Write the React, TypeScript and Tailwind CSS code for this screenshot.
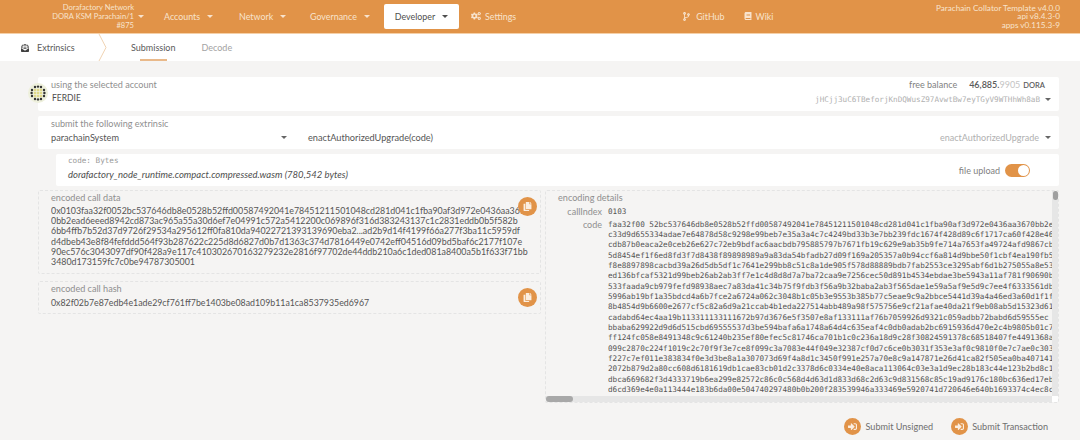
import { FaBook, FaCodeBranch, FaCogs, FaCopy, FaEnvelopeOpenText, FaSignInAlt } from 'react-icons/fa';

const encodedLines = [
  '0x0103faa32f0052bc537646db8e0528b52ffd00587492041e78451211501048cd281d041c1fba90af3d972e0436aa367',
  '0bb2ead6eeed8942cd873ac965a55a30d6ef7e04991c572a5412200c069896f316d383243137c1c2831eddb0b5f582b',
  '6bb4ffb7b52d37d9726f29534a295612ff0fa810da94022721393139690eba2...ad2b9d14f4199f66a277f3ba11c5959df',
  'd4dbeb43e8f84fefddd564f93b287622c225d8d6827d0b7d1363c374d7816449e0742eff04516d09bd5baf6c2177f107e',
  '90ec576c3043097df90f428a9e117c410302670163279232e2816f97702de44ddb210a6c1ded081a8400a5b1f633f71bb',
  '3480d173159fc7c0be94787305001',
];

const codeLines = [
  'faa32f00 52bc537646db8e0528b52ffd00587492041e78451211501048cd281d041c1fba90af3d972e0436aa3670bb2e',
  'c33d9d655334adae7e64878d58c9298e99beb7e35a3a4c7c4249bd33b3e7bb239fdc1674f428d89c6f1717ca60f428e46',
  'cdb87b0eaca2e0ceb26e627c72eb9bdfac6aacbdb795885797b7671fb19c629e9ab35b9fe714a7653fa49724afd9867cb',
  '5d8454ef1f6ed8fd3f7d8438f89898989a9a83da54bfadb27d09f169a205357a0b94ccf6a814d9bbe50f1cbf4ea190fb5',
  'f8e8897898cacbd39a26d5db5df1c7641e299bb8c51c8a1de905f578d88889bdb7fab2553ce3295abf6d1b275055a8e53',
  'ed136bfcaf5321d99beb26ab2ab3ff7e1c4d8d8d7a7ba72caa9e7256cec50d891b4534ebdae3be5943a11af781f90690b',
  '533faada9cb979fefd98938aec7a83da41c34b75f9fdb3f56a9b32baba2ab3f565dae1e59a5af9e5d9c7ee4f6333561db',
  '5996ab19bf1a35bdcd4a6b7fce2a6724a062c3048b1c05b3e9553b385b77c5eae9c9a2bbce5441d39a4a46ed3a60d1f1f',
  '8b4854d9b6600e2677cf5c82a6d9a21ccab4b1eda227514abb489a98f575756e9cf21afae40da21f9eb08ab5d15323d61',
  'cadabd64ec4aa19b113311133111672b97d3676e5f3507e8af133111af76b7059926d9321c059adbb72babd6d59555ec',
  'bbaba629922d9d6d515cbd69555537d3be594bafa6a1748a64d4c635eaf4c0db0adab2bc6915936d470e2c4b9805b01c7',
  'ff124fc058e8491348c9c61240b235ef80efec5c81746ca701b1c0c236a18d9c28f30824591378c68518407fe4491368a',
  '099c2870c224f1019c2c70f9f3e7ce8f099c3a7083e44f049e32387cf0d7c6ce0b3031f353e3af0c9810f0e7c7ae0c303',
  'f227c7ef011e383834f0e3d3be8a1a307073d69f4a8d1c3450f991e257a70e8c9a147871e26d41ca82f505ea0ba407141',
  '2072b879d2a80cc608d6181619db1cae83cb01d2c3378d6c0334e40e8aca113064c03e3a1d9ec28b183c44e123b2bd8c1',
  'dbca669682f3d4333719b6ea299e82572c86c0c568d4d63d1d833d68c2d63c9d831568c85c19ad9176c180bc636ed17eb',
  'd6cd369e4e0a113444e183b6da00e504740297480b0b200f283539946a333469e5920741d720646e640b1693374c4ec8c',
];

const Caret = ({ className }: { className: string }) => (
  <span className={`inline-block h-0 w-0 border-x-[3px] border-t-[3px] border-x-transparent ${className}`} />
);

const NavItem = ({ label }: { label: string }) => (
  <div className="flex items-center gap-[7px] text-[#f8e3cd]">
    <span>{label}</span>
    <Caret className="border-t-[#f8e3cd]" />
  </div>
);

const CopyButton = () => (
  <div className="absolute right-[3px] top-[6px] flex h-[19px] w-[19px] items-center justify-center rounded-full bg-[#e19348] text-[9px] text-[#fbeee0]">
    <FaCopy />
  </div>
);

const SubmitButton = ({ label }: { label: string }) => (
  <div className="flex items-center gap-[4px] text-[9.1px] text-[#6f6f6f]">
    <span className="flex h-[17px] w-[17px] items-center justify-center rounded-full bg-[#e19348] text-[9px] text-[#fbeee0]">
      <FaSignInAlt />
    </span>
    <span>{label}</span>
  </div>
);

const App = () => {
  return (
    <div className="h-[440px] w-[1080px] overflow-hidden bg-[#f5f4f3] font-['Lato',sans-serif] text-[9.5px] text-[#555555]">
      {/* Top nav */}
      <div className="flex h-[34px] items-center border-b border-[#f5d0a8] bg-[#e19348] text-[8.9px]">
        <div className="flex w-[144px] items-center justify-end gap-[4px] text-[#f8e3cd]">
          <div className="text-right text-[7.6px] leading-[9px]">
            <div>Dorafactory Network</div>
            <div>DORA KSM Parachain/1</div>
            <div>#875</div>
          </div>
          <Caret className="border-t-[#f8e3cd]" />
        </div>
        <div className="ml-[20px] flex w-[75px]">
          <NavItem label="Accounts" />
        </div>
        <div className="flex w-[71px]">
          <NavItem label="Network" />
        </div>
        <div className="flex w-[74px]">
          <NavItem label="Governance" />
        </div>
        <div className="flex h-[25px] w-[75px] items-center justify-center gap-[7px] rounded-[2px] bg-white text-[#4e4e4e]">
          <span>Developer</span>
          <Caret className="border-t-[#4e4e4e]" />
        </div>
        <div className="ml-[12px] flex items-center gap-[4px] text-[#f8e3cd]">
          <FaCogs className="text-[10px]" />
          <span>Settings</span>
        </div>
        <div className="ml-[166px] flex items-center gap-[5px] text-[#f8e3cd]">
          <FaCodeBranch className="text-[9px]" />
          <span>GitHub</span>
        </div>
        <div className="ml-[19px] flex items-center gap-[4px] text-[#f8e3cd]">
          <FaBook className="text-[8px]" />
          <span>Wiki</span>
        </div>
        <div className="ml-auto mr-[20px] text-right text-[8.2px] leading-[8.2px] text-[#f8e3cd]">
          <div>Parachain Collator Template v4.0.0</div>
          <div>api v8.4.3-0</div>
          <div>apps v0.115.3-9</div>
        </div>
      </div>

      {/* Sub tabs */}
      <div className="flex h-[27px] items-center bg-white pl-[21px] text-[9px]">
        <FaEnvelopeOpenText className="text-[8px] text-[#3f3f3f]" />
        <span className="ml-[8px] w-[61px] text-[#5a5a5a]">Extrinsics</span>
        <svg width="9" height="27" viewBox="0 0 9 27" fill="none">
          <path d="M1 0 L8 13.5 L1 27" stroke="#f0d3b3" strokeWidth="1" />
        </svg>
        <div className="relative ml-[24px] flex h-full items-center text-[#5a5a5a]">
          Submission
          <div className="absolute bottom-0 left-[9px] h-[2px] w-[27px] bg-[#e9b98a]" />
        </div>
        <span className="ml-[26px] text-[#a3a3a3]">Decode</span>
      </div>

      <div className="pl-[38px] pr-[21px] pt-[16px]">
        {/* Account */}
        <div className="relative flex h-[34px] justify-between rounded-[2px] bg-white pl-[13px] pr-[8px] pt-[3px]">
          <div className="absolute left-[-10px] top-[6px] flex h-[20px] w-[20px] items-center justify-center rounded-full bg-[#eef0dc]">
            <svg width="16" height="16" viewBox="0 0 16 16">
              <g fill="#e0d98a">
                <circle cx="5" cy="5" r="1.3" />
                <circle cx="8" cy="5" r="1.3" />
                <circle cx="11" cy="5" r="1.3" />
                <circle cx="5" cy="8" r="1.3" />
                <circle cx="8" cy="8" r="1.3" />
                <circle cx="11" cy="8" r="1.3" />
                <circle cx="5" cy="11" r="1.3" />
                <circle cx="8" cy="11" r="1.3" />
                <circle cx="11" cy="11" r="1.3" />
              </g>
              <g fill="#333333">
                <circle cx="5" cy="2" r="1.2" />
                <circle cx="8" cy="1.6" r="1.2" />
                <circle cx="11" cy="2" r="1.2" />
                <circle cx="2" cy="5" r="1.2" />
                <circle cx="14" cy="5" r="1.2" />
                <circle cx="1.6" cy="8" r="1.2" />
                <circle cx="14.4" cy="8" r="1.2" />
                <circle cx="2" cy="11" r="1.2" />
                <circle cx="14" cy="11" r="1.2" />
                <circle cx="5" cy="14" r="1.2" />
                <circle cx="8" cy="14.4" r="1.2" />
                <circle cx="11" cy="14" r="1.2" />
              </g>
            </svg>
          </div>
          <div>
            <div className="text-[9.1px] leading-[10px] text-[#8f8f8f]">using the selected account</div>
            <div className="ml-[1px] mt-[3px] text-[8.5px] leading-[11px] text-[#4e4e4e]">FERDIE</div>
          </div>
          <div className="flex flex-col items-end">
            <div className="mr-[6px] flex items-baseline text-[9px] leading-[10px] text-[#7f7f7f]">
              <span>free balance</span>
              <span className="ml-[12px] font-semibold text-[#5a5a5a]">46,885.</span>
              <span className="text-[#c4c4c4]">9905</span>
              <span className="ml-[3px] text-[7.5px] font-semibold text-[#5a5a5a]">DORA</span>
            </div>
            <div className="mt-[3px] flex items-center gap-[5px]">
              <span className="font-['DejaVu_Sans_Mono',monospace] text-[7.64px] leading-[11px] text-[#b0b0b0]">
                jHCjj3uC6TBeforjKnDQWusZ97AvwtBw7eyTGyV9WTHhWh8aB
              </span>
              <Caret className="border-t-[#666666]" />
            </div>
          </div>
        </div>

        {/* Extrinsic */}
        <div className="mt-[5px] flex h-[33px] rounded-[2px] bg-white pl-[13px] pr-[8px] pt-[3px]">
          <div>
            <div className="text-[9.1px] leading-[10px] text-[#8f8f8f]">submit the following extrinsic</div>
            <div className="mt-[1.5px] flex items-center text-[9.2px] leading-[13px]">
              <span className="w-[230px]">parachainSystem</span>
              <Caret className="border-t-[#666666]" />
              <span className="ml-[21px]">enactAuthorizedUpgrade(code)</span>
            </div>
          </div>
          <div className="ml-auto mt-[11.5px] flex items-center gap-[6px] self-start text-[9px] leading-[13px] text-[#b0b0b0]">
            <span>enactAuthorizedUpgrade</span>
            <Caret className="border-t-[#666666]" />
          </div>
        </div>

        {/* Code file */}
        <div className="ml-[18px] mt-[4.5px] flex h-[32px] items-start rounded-[2px] bg-white pl-[12px] pr-[29px] pt-[2px]">
          <div>
            <div className="font-['DejaVu_Sans_Mono',monospace] text-[7.64px] leading-[10px] text-[#9a9a9a]">code: Bytes</div>
            <div className="mt-[3px] text-[9.5px] italic leading-[11px] text-[#4e4e4e]">
              dorafactory_node_runtime.compact.compressed.wasm (780,542 bytes)
            </div>
          </div>
          <div className="ml-auto mt-[8px] flex items-center gap-[5px]">
            <span className="text-[9px] text-[#7f7f7f]">file upload</span>
            <div className="flex h-[13px] w-[25px] items-center justify-end rounded-full bg-[#e19348] pr-[1px]">
              <div className="h-[11px] w-[11px] rounded-full bg-white" />
            </div>
          </div>
        </div>

        <div className="mt-[4.5px] flex gap-[4px]">
          {/* Encoded */}
          <div className="w-[503px]">
            <div className="relative h-[84px] rounded-[2px] border border-dashed border-[#e4e4e4] pl-[12px] pt-[1px]">
              <div className="text-[9.1px] leading-[11px] text-[#8f8f8f]">encoded call data</div>
              <div className="mt-[2.5px] w-[478px] overflow-hidden whitespace-nowrap text-[8.85px] leading-[10.35px]">
                {encodedLines.map((line, i) => (
                  <div key={i}>{line}</div>
                ))}
              </div>
              <CopyButton />
            </div>
            <div className="relative mt-[7px] h-[33px] rounded-[2px] border border-dashed border-[#e4e4e4] pl-[12px] pt-[1px]">
              <div className="text-[9.1px] leading-[11px] text-[#8f8f8f]">encoded call hash</div>
              <div className="mt-[3.5px] text-[8.8px] leading-[10.35px]">
                0x82f02b7e87edb4e1ade29cf761ff7be1403be08ad109b11a1ca8537935ed6967
              </div>
              <CopyButton />
            </div>
          </div>

          {/* Encoding details */}
          <div className="relative h-[213px] w-[514px] overflow-hidden rounded-[2px] border border-dashed border-[#e4e4e4] pl-[12px] pt-[1px]">
            <div className="text-[9.1px] leading-[11px] text-[#8f8f8f]">encoding details</div>
            <div className="mt-[3.5px] flex">
              <div className="w-[44px] text-right text-[9px] leading-[10px] text-[#8f8f8f]">callIndex</div>
              <div className="ml-[6px] font-['DejaVu_Sans_Mono',monospace] text-[7.64px] leading-[10px]">0103</div>
            </div>
            <div className="mt-[3px] flex">
              <div className="w-[44px] text-right text-[9px] leading-[10.35px] text-[#8f8f8f]">code</div>
              <div className="ml-[6px] w-[445px] overflow-hidden whitespace-nowrap font-['DejaVu_Sans_Mono',monospace] text-[7.64px] leading-[10.35px]">
                {codeLines.map((line, i) => (
                  <div key={i}>{line}</div>
                ))}
              </div>
            </div>
            {/* Scrollbars */}
            <div className="absolute bottom-0 right-0 top-0 w-[6px] bg-[#e6e6e6]">
              <div className="ml-[1px] h-[9px] w-[5px] rounded-full bg-[#9f9f9f]" />
            </div>
            <div className="absolute bottom-0 left-0 right-[6px] h-[6px] bg-[#e6e6e6]">
              <div className="h-[6px] w-[27px] rounded-full bg-[#a8a8a8]" />
            </div>
            <div className="absolute bottom-0 right-0 h-[6px] w-[6px] bg-white" />
          </div>
        </div>

        {/* Actions */}
        <div className="mt-[15px] flex justify-end gap-[18px] pr-[11px]">
          <SubmitButton label="Submit Unsigned" />
          <SubmitButton label="Submit Transaction" />
        </div>
      </div>
    </div>
  );
};

export default App;
